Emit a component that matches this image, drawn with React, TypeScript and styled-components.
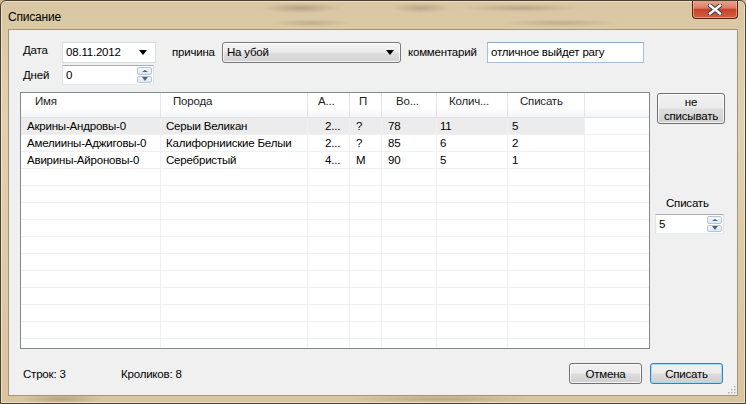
import React from "react"
import styled, { createGlobalStyle } from "styled-components"

const GlobalStyle = createGlobalStyle`
  html, body {
    margin: 0;
    padding: 0;
    background: #cdb893;
  }
  body {
    font-family: "Liberation Sans", Arial, sans-serif;
    font-size: 11.5px;
    letter-spacing: -0.2px;
    color: #000;
  }
  * { box-sizing: border-box; }
`

const columns = [
  { title: "Имя", w: 140, hpad: 14, pad: 6 },
  { title: "Порода", w: 147, hpad: 12, pad: 5 },
  { title: "А...", w: 42, hpad: 10, pad: 17 },
  { title: "П", w: 32, hpad: 9, pad: 6 },
  { title: "Во...", w: 55, hpad: 14, pad: 6 },
  { title: "Колич...", w: 71, hpad: 12, pad: 3 },
  { title: "Списать", w: 77, hpad: 12, pad: 4 },
]

const rows = [
  ["Акрины-Андровы-0", "Серыи Великан", "2...", "?", "78", "11", "5"],
  ["Амелиины-Аджиговы-0", "Калифорнииские Белыи", "2...", "?", "85", "6", "2"],
  ["Авирины-Айроновы-0", "Серебристый", "4...", "М", "90", "5", "1"],
]

const EMPTY_ROWS = 11
const template = columns.map((c) => `${c.w}px`).join(" ") + " 1fr"

const Window = styled.div`
  width: 746px;
  height: 404px;
  border: 1px solid #4e3f2d;
  border-radius: 6px 6px 0 0;
  display: flex;
  flex-direction: column;
  overflow: hidden;
  box-shadow: inset 0 0 0 1px rgba(255, 255, 255, 0.45);
  background:
    radial-gradient(ellipse 40px 5px at 60px 398px, rgba(120, 100, 70, 0.35), transparent),
    radial-gradient(ellipse 90px 4px at 440px 398px, rgba(120, 100, 70, 0.3), transparent),
    linear-gradient(180deg, #d9c7a3 0%, #e2d1b0 30%, #d8c49e 100%);
`

const TitleBar = styled.div`
  height: 28px;
  display: flex;
  align-items: flex-start;
  justify-content: space-between;
  background:
    radial-gradient(ellipse 40px 5px at 300px 7px, rgba(110, 95, 70, 0.35), transparent),
    radial-gradient(ellipse 30px 5px at 420px 7px, rgba(110, 95, 70, 0.3), transparent),
    radial-gradient(ellipse 60px 4px at 520px 7px, rgba(110, 95, 70, 0.3), transparent),
    radial-gradient(ellipse 60px 4px at 560px 22px, rgba(110, 95, 70, 0.25), transparent),
    radial-gradient(ellipse 40px 4px at 310px 22px, rgba(110, 95, 70, 0.25), transparent);
`

const Title = styled.div`
  padding: 9px 0 0 7px;
  font-size: 12px;
  line-height: 15px;
  color: #000;
`

const CloseButton = styled.div`
  width: 46px;
  height: 19px;
  margin: -1px 7px 0 0;
  border: 1px solid #5e2216;
  border-top: none;
  border-radius: 0 0 4px 4px;
  display: flex;
  align-items: center;
  justify-content: center;
  background: linear-gradient(180deg, #e9a896 0%, #dc7c62 45%, #c5432b 52%, #d1603f 100%);
  box-shadow: inset 0 0 0 1px rgba(255, 200, 180, 0.5);
`

const Client = styled.div`
  flex: 1;
  margin: 0 7px 7px 7px;
  background: #f0f0f0;
  border: 1px solid #a3947a;
  display: flex;
  flex-direction: column;
  position: relative;
`

const Form = styled.div`
  padding: 11px 0 0 14px;
  display: flex;
  flex-direction: column;
  gap: 2px;
`

const FormRow = styled.div`
  display: flex;
  align-items: center;
`

const Label = styled.span<{ $w?: number; $up?: number }>`
  width: ${(p) => (p.$w ? `${p.$w}px` : "auto")};
  flex: none;
  white-space: nowrap;
  line-height: 15px;
  margin-top: ${(p) => (p.$up ? `-${p.$up}px` : "0")};
`

const Field = styled.div<{ $w: number; $h: number }>`
  width: ${(p) => p.$w}px;
  height: ${(p) => p.$h}px;
  flex: none;
  background: #fff;
  border: 1px solid #d8dde4;
  display: flex;
  align-items: center;
  padding-left: 3px;
  line-height: 15px;
`

const TextBox = styled(Field)`
  border-color: #a6bfdc;
  border-top-color: #8ea9cc;
`

const SpinField = styled(Field)`
  border: 1px solid #abadb3;
  border-left-color: #e2e3ea;
  border-right-color: #dbdfe6;
  border-bottom-color: #e3e9ef;
  padding-right: 1px;
  justify-content: space-between;
`

const SpinButtons = styled.div`
  width: 15px;
  height: 100%;
  display: flex;
  flex-direction: column;
  gap: 1px;
  padding: 1px 0;
`

const SpinHalf = styled.div`
  flex: 1;
  border: 1px solid #b7c4d6;
  border-radius: 2px;
  background: linear-gradient(180deg, #f4f7fb, #dfe7f1);
  display: flex;
  align-items: center;
  justify-content: center;
`

const Arrow = styled.span<{ $up?: boolean; $color?: string; $size?: number }>`
  width: 0;
  height: 0;
  border-left: ${(p) => p.$size ?? 3}px solid transparent;
  border-right: ${(p) => p.$size ?? 3}px solid transparent;
  ${(p) =>
    p.$up
      ? `border-bottom: ${(p.$size ?? 3) - 1}px solid ${p.$color ?? "#4d6185"};`
      : `border-top: ${(p.$size ?? 3) + 1}px solid ${p.$color ?? "#4d6185"};`}
`

const DropField = styled(Field)`
  justify-content: space-between;
  padding-right: 8px;
`

const Combo = styled.div<{ $w: number }>`
  width: ${(p) => p.$w}px;
  height: 21px;
  flex: none;
  margin-top: 1px;
  border: 1px solid #7a7a7a;
  border-radius: 3px;
  background: linear-gradient(180deg, #f3f3f3 0%, #ececec 48%, #dedede 52%, #d3d3d3 100%);
  box-shadow: inset 0 0 0 1px rgba(255, 255, 255, 0.7);
  display: flex;
  align-items: center;
  justify-content: space-between;
  padding: 0 6px 0 4px;
  line-height: 15px;
`

const Middle = styled.div`
  display: flex;
  margin-top: 7px;
  height: 257px;
`

const GridBox = styled.div`
  width: 630px;
  margin-left: 11px;
  height: 257px;
  border: 1px solid #828790;
  background: #fff;
  overflow: hidden;
`

const HeaderRow = styled.div`
  display: grid;
  grid-template-columns: ${template};
  height: 25px;
  border-bottom: 1px solid #e2e2e2;
  background: linear-gradient(180deg, #ffffff 0%, #ffffff 60%, #f4f5f7 100%);
`

const HeaderCell = styled.div<{ $pad: number }>`
  border-right: 1px solid #e5e5e5;
  padding-left: ${(p) => p.$pad}px;
  line-height: 17px;
  white-space: nowrap;
  overflow: hidden;
  color: #1e1e1e;
`

const BodyRow = styled.div`
  display: grid;
  grid-template-columns: ${template};
  height: 17px;
`

const Cell = styled.div<{ $pad: number; $sel?: boolean; $fill?: boolean }>`
  border-right: ${(p) => (p.$fill ? "none" : "1px solid #f0f0f0")};
  border-bottom: 1px solid #f0f0f0;
  padding-left: ${(p) => p.$pad}px;
  line-height: 16px;
  white-space: nowrap;
  overflow: hidden;
  background: ${(p) => (p.$sel ? "#ececec" : "transparent")};
`

const Side = styled.div`
  width: 70px;
  margin-left: 7px;
  display: flex;
  flex-direction: column;
  align-items: flex-start;
  padding-top: 1px;
`

const Button = styled.button<{ $w: number; $h: number; $default?: boolean }>`
  width: ${(p) => p.$w}px;
  height: ${(p) => p.$h}px;
  flex: none;
  padding: 0;
  font-family: "Liberation Sans", Arial, sans-serif;
  font-size: 11.5px;
  letter-spacing: -0.2px;
  line-height: 14px;
  color: #000;
  border: 1px solid ${(p) => (p.$default ? "#3c7fb1" : "#707070")};
  border-radius: 3px;
  background: linear-gradient(180deg, #f2f2f2 0%, #ebebeb 48%, #dddddd 52%, #cfcfcf 100%);
  box-shadow: inset 0 0 0 1px ${(p) => (p.$default ? "#9fdcf7" : "rgba(255, 255, 255, 0.75)")};
`

const SideLabel = styled.div`
  margin: 72px 0 3px 9px;
  line-height: 15px;
`

const SideSpin = styled(SpinField)`
  margin-left: -2px;
`

const Footer = styled.div`
  display: flex;
  align-items: center;
  margin-top: 14px;
  padding: 0 14px 0 14px;
  height: 21px;
`

const Status = styled.span<{ $w?: number }>`
  width: ${(p) => (p.$w ? `${p.$w}px` : "auto")};
  white-space: nowrap;
`

const Buttons = styled.div`
  margin-left: auto;
  display: flex;
  gap: 8px;
`

const Grip = styled.svg`
  position: absolute;
  right: 1px;
  bottom: 1px;
`

const CloseIcon = () => (
  <svg width="14" height="11" viewBox="0 0 14 11">
    <path d="M2 1.5 L12 9.5 M12 1.5 L2 9.5" stroke="#3a3a44" strokeWidth="4.4" strokeLinecap="square" />
    <path d="M2 1.5 L12 9.5 M12 1.5 L2 9.5" stroke="#ffffff" strokeWidth="2.4" strokeLinecap="square" />
  </svg>
)

const Spinner = ({ value }: { value: string }) => (
  <>
    {value}
    <SpinButtons>
      <SpinHalf>
        <Arrow $up />
      </SpinHalf>
      <SpinHalf>
        <Arrow />
      </SpinHalf>
    </SpinButtons>
  </>
)

export default function App() {
  return (
    <>
      <GlobalStyle />
      <Window>
        <TitleBar>
          <Title>Списание</Title>
          <CloseButton>
            <CloseIcon />
          </CloseButton>
        </TitleBar>
        <Client>
          <Form>
            <FormRow>
              <Label $w={39} $up={3}>Дата</Label>
              <DropField $w={94} $h={21}>
                08.11.2012
                <Arrow $color="#000" $size={4} />
              </DropField>
              <Label $w={50} style={{ marginLeft: 16 }}>причина</Label>
              <Combo $w={179}>
                На убой
                <Arrow $color="#000" $size={4} />
              </Combo>
              <Label $w={79} style={{ marginLeft: 7 }}>комментарий</Label>
              <TextBox $w={157} $h={21}>отличное выйдет рагу</TextBox>
            </FormRow>
            <FormRow>
              <Label $w={39}>Дней</Label>
              <SpinField $w={92} $h={20}>
                <Spinner value="0" />
              </SpinField>
            </FormRow>
          </Form>

          <Middle>
            <GridBox>
              <HeaderRow>
                {columns.map((c) => (
                  <HeaderCell key={c.title} $pad={c.hpad}>{c.title}</HeaderCell>
                ))}
                <HeaderCell $pad={0} style={{ borderRight: "none" }} />
              </HeaderRow>
              {rows.map((r, i) => (
                <BodyRow key={i}>
                  {r.map((v, j) => (
                    <Cell key={j} $pad={columns[j].pad} $sel={i === 0}>{v}</Cell>
                  ))}
                  <Cell $pad={0} $fill />
                </BodyRow>
              ))}
              {Array.from({ length: EMPTY_ROWS }).map((_, i) => (
                <BodyRow key={`e${i}`}>
                  {columns.map((c) => (
                    <Cell key={c.title} $pad={0} />
                  ))}
                  <Cell $pad={0} $fill />
                </BodyRow>
              ))}
            </GridBox>
            <Side>
              <Button $w={68} $h={31}>
                не
                <br />
                списывать
              </Button>
              <SideLabel>Списать</SideLabel>
              <SideSpin $w={69} $h={20}>
                <Spinner value="5" />
              </SideSpin>
            </Side>
          </Middle>

          <Footer>
            <Status $w={98}>Строк: 3</Status>
            <Status>Кроликов: 8</Status>
            <Buttons>
              <Button $w={73} $h={21}>Отмена</Button>
              <Button $w={73} $h={21} $default>Списать</Button>
            </Buttons>
          </Footer>
          <Grip width="10" height="10" viewBox="0 0 10 10">
            {[
              [8, 2], [8, 5], [5, 5], [8, 8], [5, 8], [2, 8],
            ].map(([x, y]) => (
              <rect key={`${x}-${y}`} x={x} y={y} width="1.5" height="1.5" fill="#b6b6b6" />
            ))}
          </Grip>
        </Client>
      </Window>
    </>
  )
}
